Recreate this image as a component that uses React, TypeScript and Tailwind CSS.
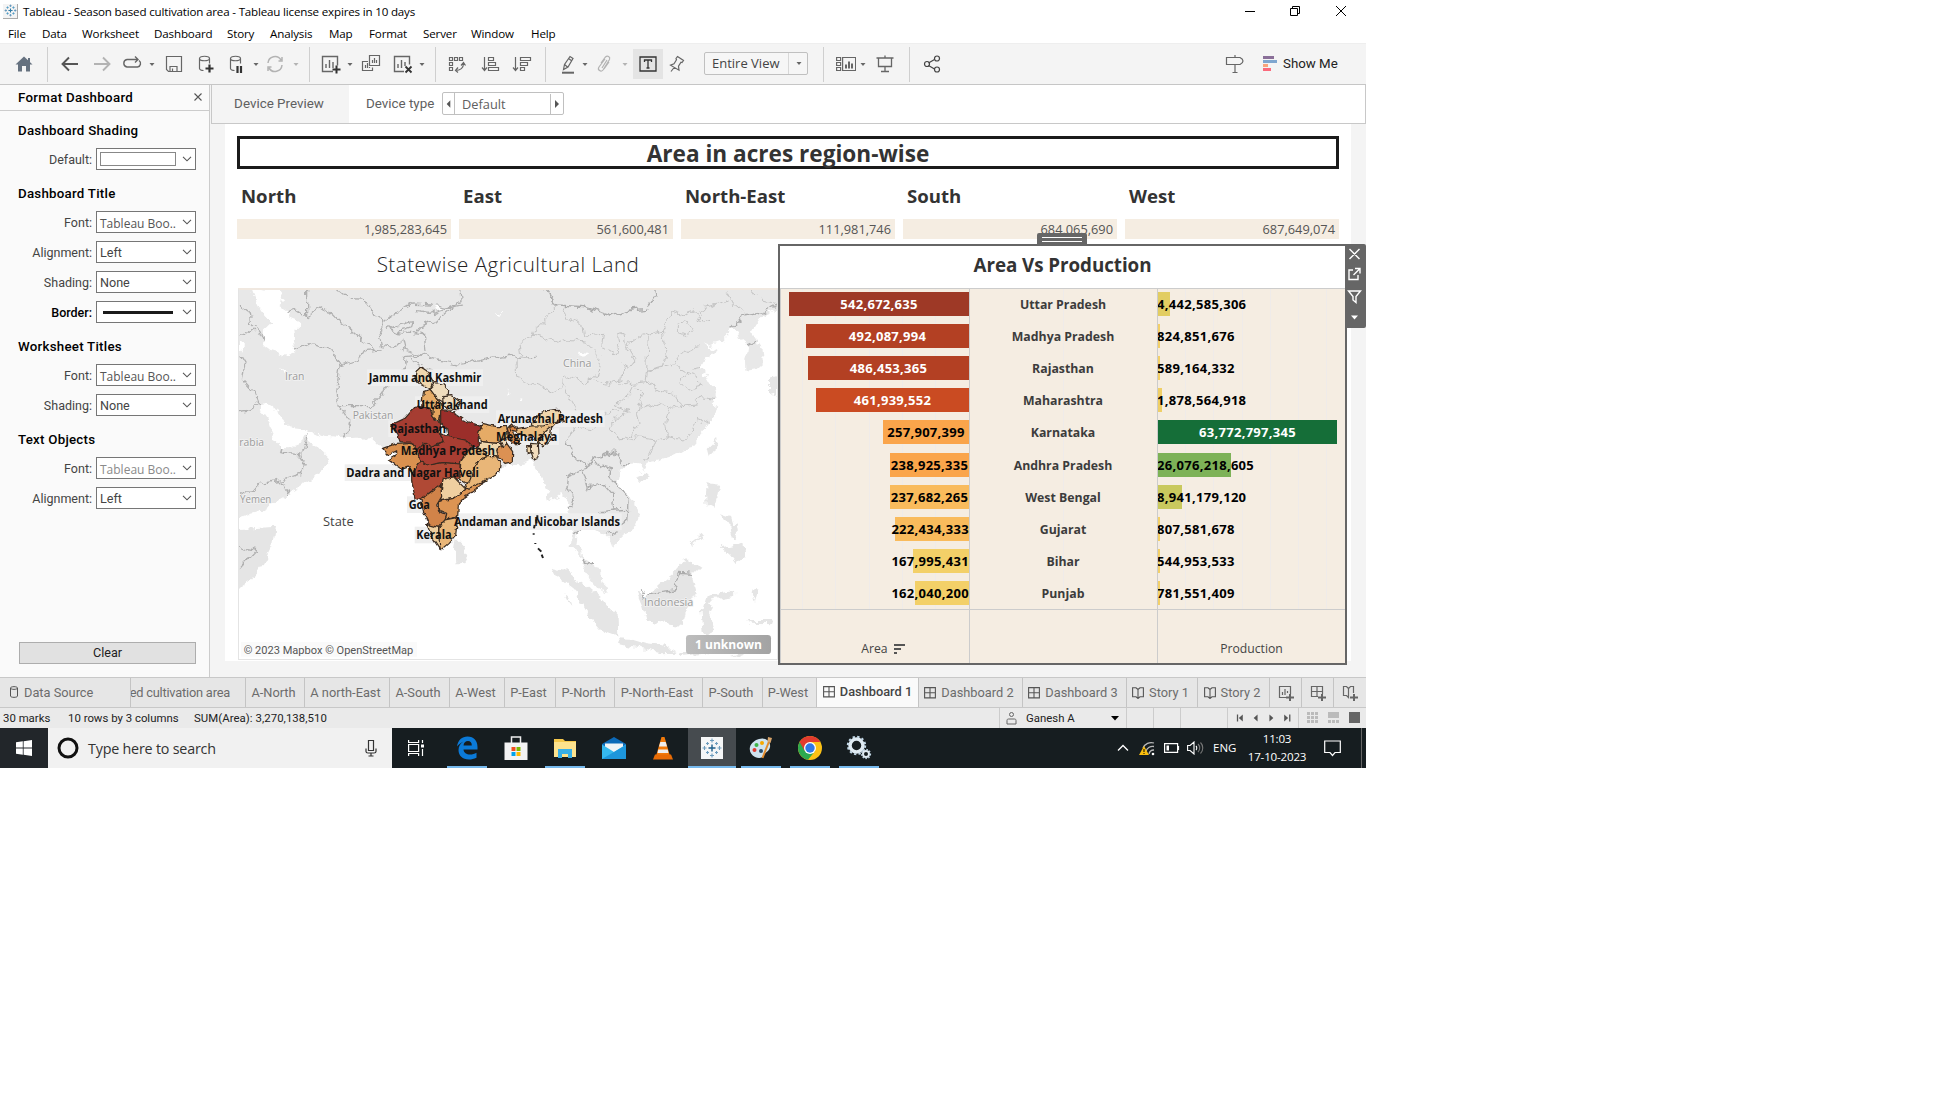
import React from "react";

type Kids = { children?: React.ReactNode };

/* ---------- small shared pieces ---------- */

function Ic({ children, cls = "", w = 20, h = 20 }: Kids & { cls?: string; w?: number; h?: number }) {
  return (
    <svg width={w} height={h} viewBox={`0 0 ${w} ${h}`} fill="none" stroke="#666" strokeWidth="1.2" className={`shrink-0 ${cls}`}>
      {children}
    </svg>
  );
}

function Caret({ cls = "", color = "#666" }: { cls?: string; color?: string }) {
  return (
    <svg width="8" height="8" viewBox="0 0 8 8" className={`shrink-0 ${cls}`}>
      <path d="M1.5 3h5L4 6z" fill={color} />
    </svg>
  );
}

function Sep({ cls = "" }: { cls?: string }) {
  return <div className={`h-[35px] w-px shrink-0 bg-[#cfcfcf] ${cls}`} />;
}

/* ---------- window chrome ---------- */

function TableauMark({ size = 14 }: { size?: number }) {
  return (
    <svg width={size} height={size} viewBox="0 0 22 22" stroke="#2f7aa5" strokeWidth="1.4" fill="none">
      <path d="M11 7.5v7M7.5 11h7" strokeWidth="1.8" />
      <path d="M11 1v4M9 3h4M11 17v4M9 19h4M1 11h4M3 9v4M17 11h4M19 9v4" stroke="#5b92b8" />
      <path d="M6 4v4M4 6h4M16 4v4M14 6h4M6 14v4M4 16h4M16 14v4M14 16h4" stroke="#4f9ac4" />
    </svg>
  );
}

function TitleBar() {
  return (
    <div className="flex h-[22px] items-center bg-white">
      <div className="ml-[3px] flex h-[15px] w-[15px] items-center justify-center border-r border-b border-[#aaa] bg-[#f4f4f4]">
        <TableauMark size={13} />
      </div>
      <span className="mt-px ml-[5px] font-['Open_Sans'] text-[11.6px] tracking-[-0.18px] text-black">
        Tableau - Season based cultivation area - Tableau license expires in 10 days
      </span>
      <Ic cls="ml-auto" w={12} h={12}>
        <path d="M1 6.5h10" stroke="#000" strokeWidth="1" />
      </Ic>
      <Ic cls="ml-[33px]" w={12} h={12}>
        <path d="M1.5 3.5h7v7h-7zM3.5 3.5v-2h7v7h-2" stroke="#000" strokeWidth="1" />
      </Ic>
      <Ic cls="mr-[19px] ml-[34px]" w={12} h={12}>
        <path d="M1 1l10 10M11 1L1 11" stroke="#000" strokeWidth="1" />
      </Ic>
    </div>
  );
}

function MenuBar() {
  const items: [string, string][] = [
    ["File", "w-[34px]"],
    ["Data", "w-[40px]"],
    ["Worksheet", "w-[72px]"],
    ["Dashboard", "w-[73px]"],
    ["Story", "w-[43px]"],
    ["Analysis", "w-[59px]"],
    ["Map", "w-[40px]"],
    ["Format", "w-[54px]"],
    ["Server", "w-[48px]"],
    ["Window", "w-[60px]"],
    ["Help", "w-[40px]"],
  ];
  return (
    <div className="flex h-[21px] items-center bg-white pt-[3px] pl-2 font-['Open_Sans'] text-[11.6px] tracking-[-0.15px] text-black">
      {items.map(([t, w]) => (
        <span key={t} className={`shrink-0 whitespace-nowrap ${w}`}>{t}</span>
      ))}
    </div>
  );
}

function ToolBar() {
  return (
    <div className="flex h-[42px] items-center border-t border-b border-t-[#eee] border-b-[#c6c6c6] bg-[#f4f4f4]">
      <Ic cls="ml-[14px]">
        <path d="M10 2.5L1.5 10.5H4V17.5H8V12H12V17.5H16V10.5H18.5z" fill="#65717f" stroke="none" />
        <path d="M14 4h2v4h-2z" fill="#65717f" stroke="none" />
      </Ic>
      <Sep cls="ml-[13px]" />
      <Ic cls="ml-3">
        <path d="M18 10H3M9 3.5L2.5 10L9 16.5" strokeWidth="1.9" stroke="#555" />
      </Ic>
      <Ic cls="ml-3">
        <path d="M2 10h15M11 3.5L17.5 10L11 16.5" strokeWidth="1.9" stroke="#b3b3b3" />
      </Ic>
      <Ic cls="ml-[10px]">
        <path d="M9 13H5a3.8 3.8 0 0 1 0-7.5H15.500M13 2.5L16 5.5L13 8.5M17 6.5a3.6 3.6 0 0 1-1.500 6.500H9" strokeWidth="1.4" />
      </Ic>
      <Caret cls="ml-[6px]" />
      <Ic cls="ml-2">
        <path d="M2.5 2.5h15v15h-13l-2-2zM6 17v-4.5h7V17M8.5 14.5V17" />
      </Ic>
      <Ic cls="ml-3">
        <path d="M3.5 4.5v10c0 1 2 2 4 2M13.5 4.5v5M3.5 4.5c0-3 10-3 10 0s-10 3-10 0" />
        <path d="M9.5 14.5h8M13.5 10.5v8" strokeWidth="2.2" stroke="#333" />
      </Ic>
      <Ic cls="ml-[10px]">
        <path d="M4.5 4.5v10c0 1 2 2 4 2M14.5 4.5v5M4.5 4.5c0-3 10-3 10 0s-10 3-10 0" />
        <path d="M11.5 12v7M15 12v7" strokeWidth="2.2" stroke="#333" />
      </Ic>
      <Caret cls="ml-[6px]" />
      <Ic cls="ml-[5px]">
        <path d="M3 9a7 7 0 0 1 13-3M17 11a7 7 0 0 1-13 3M17 3v4h-3.5M3 17v-4h3.5" stroke="#b3b3b3" strokeWidth="1.5" />
      </Ic>
      <Caret cls="ml-[7px]" color="#b3b3b3" />
      <Sep cls="ml-[9px]" />
      <Ic cls="ml-[11px]">
        <path d="M12 17.5H1.5v-15h15v9M5 14v-4M8.5 14V6M12 14V8" strokeWidth="1.4" />
        <path d="M11.5 15.5h8M15.5 11.5v8" strokeWidth="2" stroke="#333" />
      </Ic>
      <Caret cls="ml-[5px]" />
      <Ic cls="ml-[7px]">
        <path d="M8.5 1.5h10v10h-10zM11.5 9V6M13.5 9V4M15.5 9V6M7 7.5H1.5v9h10v-3M4.5 14v-3M6.5 14v-5M8.5 14v-1" />
      </Ic>
      <Ic cls="ml-3">
        <path d="M11 17.5H1.5v-15h15v8M5 14v-4M8.5 14V6M12 12V8" strokeWidth="1.4" />
        <path d="M12.5 12.5l6 6M18.5 12.5l-6 6" strokeWidth="1.8" stroke="#333" />
      </Ic>
      <Caret cls="ml-[5px]" />
      <Sep cls="ml-[9px]" />
      <Ic cls="ml-[11px]">
        <path d="M2.5 3.5h3v3h-3zM7.5 3.5h3v3h-3zM12.5 3.5h3v3h-3zM2.5 8.5h3v3h-3zM2.5 13.5h3v3h-3zM8.5 16.5c5 0 8-3 8-7M14 11.5l2.500-3L18.500 11.500M11 13.500L8.500 16.500L11 18.500" />
      </Ic>
      <Ic cls="ml-[13px]">
        <path d="M4.500 3v13M2 13.500l2.500 3l2.500-3M8.500 3.500h5v3h-5zM8.500 8.500h7v3h-7zM8.500 13.500h10v3h-10z" />
      </Ic>
      <Ic cls="ml-3">
        <path d="M3.500 3v13M1 13.500l2.500 3l2.500-3M8.500 3.500h10v3h-10zM8.500 8.500h7v3h-7zM8.500 13.500h4v3h-4z" />
      </Ic>
      <Sep cls="ml-[13px]" />
      <Ic cls="ml-3">
        <path d="M5.5 15.5l1-5L12 2.5l3 2L10 13zM6.5 10.5l3 2.5M10.5 4.5l3.500 2.500" />
        <path d="M4 18.7h12" strokeWidth="2" />
      </Ic>
      <Caret cls="ml-[3px]" />
      <Ic cls="ml-[6px]">
        <path d="M6 9l4.500-6c2-2 5 0 4 2.500L8 16c-2 2.500-6 0-4-3L10 5M12 6l-5 8M14 8l-5 7" stroke="#b3b3b3" />
      </Ic>
      <Caret cls="ml-[6px]" color="#b3b3b3" />
      <div className="ml-1 flex h-[30px] w-[30px] shrink-0 items-center justify-center bg-[#e4e4e4]">
        <svg width="18" height="16" viewBox="0 0 18 16" fill="none" stroke="#333" strokeWidth="1.3">
          <path d="M1 1h16v14H1zM5.5 6V4h7v2M9 4v8M7.5 12h3" />
        </svg>
      </div>
      <Ic cls="ml-1">
        <path d="M10.5 2.5l6 4l-1.500 2l-1-.3l-2.500 4l.5 4l-8.500-5l3.500-1.500l2.500-4l-.5-1.200zM7.500 13l-3.500 4.500" />
      </Ic>
      <div className="mb-[2px] ml-[17px] flex h-[23px] w-[104px] shrink-0 items-center rounded-[2px] border border-[#c0c0c0] bg-[#f6f6f6]">
        <span className="w-[84px] border-r border-[#d8d8d8] pl-[7px] font-['Open_Sans'] text-[13px] leading-[21px] text-[#444]">Entire View</span>
        <Caret cls="ml-[6px]" />
      </div>
      <Sep cls="ml-[15px]" />
      <Ic cls="ml-3">
        <path d="M.6 3.5h4v3h-4zM.6 8.5h4v3h-4zM.6 13.5h4v3h-4zM6.600 3.500h13v13h-13z" />
        <path d="M10 14.5v-4M13 14.5v-7M16 14.5v-5" strokeWidth="2" />
      </Ic>
      <Caret cls="ml-[3px]" />
      <Ic cls="ml-2">
        <path d="M1.5 4h17M3.5 4v8.500h13V4M10 1.500v2M10 13v4.500M6 17.500h8" strokeWidth="1.3" />
      </Ic>
      <Sep cls="ml-[14px]" />
      <Ic cls="ml-3">
        <path d="M6.500 9L12.500 5.500M6.500 11.500L12.500 15" stroke="#444" />
        <circle cx="5" cy="10" r="2.5" stroke="#444" />
        <circle cx="15" cy="4.5" r="2.5" stroke="#444" />
        <circle cx="15" cy="15.5" r="2.5" stroke="#444" />
      </Ic>
      <Ic cls="ml-[283px]">
        <path d="M1.5 3.5h13.500c4 2 4 5 0 7H1.500zM10 1v2.500M10 10.500v8M7.500 18.500h5" />
      </Ic>
      <svg width="14" height="16" viewBox="0 0 14 16" className="ml-[18px] shrink-0">
        <path d="M0 0h11v3H0z" fill="#8a6f98" />
        <path d="M0 4h14v3H0z" fill="#7fa6cf" />
        <path d="M0 8h5v3H0z" fill="#f8a47c" />
        <path d="M0 12h8v3H0z" fill="#fb6a7c" />
      </svg>
      <span className="ml-[6px] shrink-0 font-['Roboto'] text-[13.3px] whitespace-nowrap text-[#222]">Show Me</span>
    </div>
  );
}

/* ---------- format pane ---------- */

function Chevron() {
  return (
    <svg width="10" height="6" viewBox="0 0 10 6" className="mr-[3px] ml-auto shrink-0" fill="none" stroke="#555" strokeWidth="1.1">
      <path d="M1 .8L5 4.800L9 .8" />
    </svg>
  );
}

function Field({ label, value, kind = "text", bold, dim }: { label: string; value?: string; kind?: "text" | "swatch" | "line" | "font"; bold?: boolean; dim?: boolean }) {
  return (
    <div className="flex h-[22px] items-center">
      <span className={`w-[92px] shrink-0 pt-px text-right text-[12.5px] leading-[18px] ${bold ? "font-medium text-black" : "text-[#444]"}`}>{label}</span>
      <div className="ml-[4px] flex h-[22px] w-[100px] items-center border border-[#767676] bg-white pl-[3px]">
        {kind === "swatch" && <span className="h-[14px] w-[76px] border border-[#888]" />}
        {kind === "line" && <span className="ml-[3px] h-[3px] w-[70px] bg-[#1b1b1b]" />}
        {kind === "text" && <span className="pt-px text-[12.6px] leading-[18px] text-[#444]">{value}</span>}
        {kind === "font" && (
          <span className={`pt-[4px] font-['Open_Sans'] text-[12px] whitespace-nowrap ${dim ? "text-[#8a8a8a]" : "text-[#555]"}`}>{value}</span>
        )}
        <Chevron />
      </div>
    </div>
  );
}

function Group({ title, children, first }: Kids & { title: string; first?: boolean }) {
  return (
    <div className={first ? "mt-[10px]" : "mt-[14px]"}>
      <div className="h-[18px] pl-[18px] text-[13.3px] leading-[20px] font-medium tracking-[0.25px] text-black">{title}</div>
      <div className="mt-[9px] flex flex-col gap-2">{children}</div>
    </div>
  );
}

function FormatPane() {
  return (
    <div className="flex h-[592px] w-[210px] shrink-0 flex-col border-r border-[#ccc] bg-[#fafafa] font-['Roboto']">
      <div className="flex h-[26px] items-center border-b border-[#ccc] pl-[18px]">
        <span className="text-[13.3px] font-medium tracking-[0.3px] text-black">Format Dashboard</span>
        <svg width="8" height="8" viewBox="0 0 8 8" className="mr-[7px] mb-[2px] ml-auto" stroke="#555" strokeWidth="1.1">
          <path d="M.5.500l7 7M7.500.500l-7 7" />
        </svg>
      </div>
      <Group title="Dashboard Shading" first>
        <Field label="Default:" kind="swatch" />
      </Group>
      <Group title="Dashboard Title">
        <Field label="Font:" value="Tableau Boo.." kind="font" />
        <Field label="Alignment:" value="Left" />
        <Field label="Shading:" value="None" />
        <Field label="Border:" kind="line" bold />
      </Group>
      <Group title="Worksheet Titles">
        <Field label="Font:" value="Tableau Boo.." kind="font" />
        <Field label="Shading:" value="None" />
      </Group>
      <Group title="Text Objects">
        <Field label="Font:" value="Tableau Boo.." kind="font" dim />
        <Field label="Alignment:" value="Left" />
      </Group>
      <button className="mt-auto mb-[13px] ml-[19px] h-[22px] w-[177px] border border-[#adadad] bg-[#e1e1e1] text-[12.6px] leading-[20px] text-[#222]">
        Clear
      </button>
    </div>
  );
}

/* ---------- map ---------- */

const LAND =
  "M14 14H1650V80L1600 105L1565 160L1575 175L1598 205L1602 250L1580 270L1546 275L1545 240L1552 215L1555 195L1530 175L1525 150L1505 150L1470 185L1440 195L1410 182L1385 180L1405 160L1435 148L1468 125L1458 145L1440 165L1412 180L1440 202L1470 210L1432 232L1410 262L1430 290L1450 325L1460 352L1445 365L1465 380L1440 425L1420 460L1390 495L1350 520L1315 532L1280 542L1250 548L1237 575L1218 550L1195 552L1165 575L1160 602L1190 640L1215 670L1226 710L1218 742L1180 767L1148 800L1143 780L1130 765L1100 745L1075 740L1060 715L1040 760L1036 790L1055 810L1060 835L1090 852L1110 880L1120 912L1130 940L1105 925L1075 890L1060 855L1050 822L1022 800L1025 770L1032 750L1020 690L1000 638L985 650L960 662L948 655L955 630L940 600L915 560L905 540L870 550L840 548L810 555L760 605L700 640L685 680L680 750L650 790L632 810L610 780L580 700L555 650L545 590L540 560L480 540L500 525L460 508L425 472L340 475L280 470L235 450L190 445L165 430L135 385L110 370L90 372L95 395L120 430L135 480L150 498L205 500L225 465L238 490L275 510L300 535L290 560L240 600L170 650L80 700L14 718Z";
const CASPIAN =
  "M60 20L150 30L160 60L142 75L165 90L175 110L205 122L203 145L190 155L196 215L165 228L120 215L96 195L100 150L122 130L90 90L75 60Z";
const ISLANDS =
  "M14 748L70 745L138 740L130 790L100 850L60 900L14 930ZM680 780L700 800L712 828L700 850L680 850L675 815ZM965 860L1005 870L1060 912L1120 960L1160 1010L1162 1070L1120 1055L1080 1010L1030 930L980 890ZM1160 1078L1210 1080L1250 1092L1310 1100L1340 1118L1290 1120L1170 1092ZM1220 935L1250 945L1290 910L1330 880L1370 835L1410 862L1385 885L1400 940L1370 990L1358 1035L1310 1030L1250 1020L1240 980ZM1430 948L1475 938L1520 932L1505 948L1435 960L1452 985L1438 1010L1450 1048L1422 1070L1415 1000ZM1430 610L1470 615L1465 640L1450 690L1430 680L1428 640ZM1475 802L1540 788L1546 830L1520 852L1500 825ZM1460 478L1452 520L1436 535L1430 510ZM1215 590L1245 580L1256 590L1235 612ZM1470 700L1500 710L1510 740L1490 735ZM1500 740L1525 730L1530 760L1510 780ZM1620 290L1638 285V340L1620 345ZM1380 800L1420 768L1415 762L1378 795ZM1575 920L1585 930L1575 970L1568 940ZM1545 1020L1620 1020L1630 1030L1560 1028ZM1350 1120L1420 1110L1440 1122L1360 1130ZM1000 935L1015 950L1030 985L1015 965ZM1500 1125L1560 1105L1530 1130Z";
const BORDERS =
  "M230 27V110L200 90L165 100M230 110L270 78L310 105L345 135L390 175L430 205L455 210M316 27L350 55L400 58L430 100L465 125L490 105L545 72L600 75L650 85L693 65L690 27M465 125L445 160L455 200L490 205L515 182L522 210L580 225L640 245L680 255L720 248L780 235L850 228L862 235L920 232M465 150L500 135L550 125L545 140L500 155L480 145ZM560 95L600 100L693 75M560 158L575 140L640 110L690 65M585 210L580 160L500 155M195 210L240 188L290 205L325 240L330 258L385 240L400 215L455 210M330 258L320 330L328 380L365 430L340 474M328 380L420 380L450 350L470 320L500 300L530 260L520 230L580 225M27 75L60 100L65 130L90 155L100 180M27 160L55 165L75 150M27 230L45 260L40 300L75 340L88 372L60 390L27 395M27 635L65 640L90 610L155 600L215 580L222 540L210 525L165 520L150 500M155 600L177 648M215 525L235 460M27 800L80 812L27 868M540 235L570 260L610 275L620 300";
const CHINA =
  "M980 78L950 110L920 140L910 170L870 185L875 225L858 240L860 290L920 315L970 335L1000 315L1005 285L1060 310L1105 280L1110 230L1070 190L1010 180L985 190L910 165M1000 80L1015 115L1055 130L1060 165L1120 160L1115 205L1150 225L1165 205L1160 165L1185 160L1190 200L1215 240L1195 265L1180 255L1172 300L1140 312L1090 300L1078 290M1190 200L1230 170L1300 150L1325 95L1360 105L1390 95L1410 115L1440 125M1255 165L1250 270L1300 265L1308 220L1300 150M1250 270L1245 305L1170 315M1250 275L1330 250L1350 225L1400 200M1345 130L1370 125L1385 145L1370 170L1345 160ZM1330 250L1370 275L1410 265M1370 280L1350 310L1370 330L1410 320L1400 290L1370 280M1245 305L1290 330L1340 345L1350 380L1400 375L1410 350L1455 355M1215 320L1240 350L1220 390L1270 370L1320 385L1350 380L1380 375M1320 385L1310 430L1315 470L1360 480L1390 450L1400 415L1440 430M1220 390L1230 430L1210 460L1165 480L1140 440L1160 410L1200 395L1155 380L1200 340L1210 320M1165 480L1220 470L1275 480L1315 470M1275 480L1260 520L1240 545M1000 320L1030 370L1040 430L1010 490M1030 440L1090 450L1120 400L1165 395M1490 60L1460 75L1410 90L1415 115M1490 30L1510 70L1540 95M1560 27L1600 60L1635 70";
const NATIONS =
  "M945 27L980 75L1060 80L1145 105L1200 90L1250 85L1275 45L1270 27M1505 148L1540 105L1600 95L1638 75M1010 490L1035 530L1070 555L1110 530L1150 515L1180 550L1200 552M1060 570L1090 535L1110 560L1145 570L1140 595L1170 620L1195 660L1190 720L1170 735M1060 570L1010 590L1005 620L1030 650L1020 690M1060 575L1075 625L1120 610L1150 645L1155 690L1110 695L1105 720M1155 690L1195 688M1050 830L1065 852L1095 850M1230 925L1245 945L1290 935L1330 930L1345 880L1390 883M1550 195L1582 180M1135 765L1170 755M1030 765L1055 740";

type Shape = { d: string; c: string };
const STATES: Shape[] = [
  { d: "M558 275L572 261L590 272L610 305L600 328L575 315L555 295Z", c: "#efd7ae" },
  { d: "M600 328L615 308L640 312L656 328L655 345L638 365L620 355Z", c: "#efdcbd" },
  { d: "M638 350L665 347L690 365L680 392L655 390L640 375Z", c: "#efdcbd" },
  { d: "M580 335L600 328L625 360L620 395L628 412L610 420L598 395L575 380Z", c: "#e8ad68" },
  { d: "M610 380L625 362L638 375L640 392L632 400L628 425L608 410Z", c: "#e5a55d" },
  { d: "M558 378L600 385L612 420L632 430L628 455L640 485L600 500L580 490L560 510L545 487L510 485L500 455L482 435L525 415Z", c: "#a63c31" },
  { d: "M632 392L665 395L700 420L757 440L745 465L745 500L725 500L705 480L655 475L650 445L632 430Z", c: "#9b2f2c" },
  { d: "M628 455L655 470L705 480L725 500L700 530L690 552L640 548L595 555L570 545L560 510L585 490L605 500L640 485Z", c: "#a93c30" },
  { d: "M545 545L570 545L595 555L640 548L690 552L690 590L680 600L640 595L635 620L610 630L590 645L572 660L555 655L545 600Z", c: "#b04a34" },
  { d: "M458 505L500 490L545 487L560 510L570 545L548 580L538 560L515 568L475 540L500 525L500 512L475 524Z", c: "#da9150" },
  { d: "M757 430L800 440L830 440L835 470L800 490L755 485L745 465Z", c: "#e6ab66" },
  { d: "M745 500L755 485L800 490L825 490L830 510L800 530L770 530L740 515Z", c: "#f0d7ad" },
  { d: "M800 510L830 490L848 515L847 545L825 550L805 530Z", c: "#dc9152" },
  { d: "M692 545L720 505L750 505L770 530L740 545L735 580L715 615L690 600Z", c: "#e9b678" },
  { d: "M720 600L740 545L770 530L800 530L810 550L808 575L760 605L725 625L705 625Z", c: "#e9b678" },
  { d: "M640 598L670 590L690 610L708 628L670 655L632 662L635 620Z", c: "#efcfa0" },
  { d: "M625 665L670 655L708 628L760 602L745 625L700 655L685 672L683 710L660 715L645 720L650 700L625 690Z", c: "#dc9452" },
  { d: "M632 615L635 650L620 675L628 695L650 705L645 720L625 742L600 738L582 700L572 660L590 645Z", c: "#d1834a" },
  { d: "M645 720L683 712L677 765L655 790L632 810L622 780L628 742Z", c: "#e9b678" },
  { d: "M590 733L625 742L628 785L630 808L608 775Z", c: "#efcfa0" },
  { d: "M832 445L845 432L855 445L848 460L870 478L872 490L848 492L840 475Z", c: "#dc9152" },
  { d: "M838 438L862 442L862 455L842 450Z", c: "#d8803f" },
  { d: "M905 438L925 405L950 392L985 388L1000 425L975 430L940 440Z", c: "#f0d7ad" },
  { d: "M860 446L905 438L940 438L985 420L962 445L940 470L925 492L912 470L862 462Z", c: "#e9bc80" },
  { d: "M925 485L945 455L965 440L960 485L940 502Z", c: "#f2dcbd" },
  { d: "M905 490L925 492L927 520L920 540L910 535L903 515Z", c: "#f2dcbd" },
  { d: "M890 500L902 500L903 518L892 520Z", c: "#f0d7ad" },
  { d: "M810 480L828 478L830 492L818 500Z", c: "#f2dcbd" },
];

const MAP_LABELS: { t: string; x: number; y: number; w: number }[] = [
  { t: "Jammu and Kashmir", x: 416, y: 306, w: 338 },
  { t: "Uttarakhand", x: 560, y: 387, w: 213 },
  { t: "Rajasthan", x: 480, y: 459, w: 168 },
  { t: "Arunachal Pradesh", x: 803, y: 429, w: 316 },
  { t: "Meghalaya", x: 798, y: 483, w: 184 },
  { t: "Madhya Pradesh", x: 512, y: 525, w: 283 },
  { t: "Dadra and Nagar Haveli", x: 349, y: 591, w: 398 },
  { t: "Goa", x: 536, y: 687, w: 64 },
  { t: "Andaman and Nicobar Islands", x: 672, y: 738, w: 498 },
  { t: "Kerala", x: 559, y: 778, w: 106 },
];
const PLACES: { t: string; x: number; y: number; w: number }[] = [
  { t: "Iran", x: 165, y: 301, w: 58 },
  { t: "Pakistan", x: 368, y: 416, w: 122 },
  { t: "rabia", x: 28, y: 498, w: 74 },
  { t: "Yemen", x: 30, y: 670, w: 94 },
  { t: "China", x: 999, y: 261, w: 85 },
  { t: "Indonesia", x: 1242, y: 978, w: 148 },
];

function MapView() {
  return (
    <div className="h-[372px] w-[540px] border border-t-2 border-[#e4e4e4] border-t-[#f0e8e0] bg-white">
      <svg width="538" height="369" viewBox="27 30 1614 1107" className="block font-['Open_Sans']">
        <defs>
          <linearGradient id="pill" x1="0" x2="1">
            <stop offset="0" stopColor="#bdbdbd" />
            <stop offset="1" stopColor="#a3a3a3" />
          </linearGradient>
          <filter id="coast" x="0" y="0" width="1" height="1">
            <feTurbulence type="fractalNoise" baseFrequency="0.035" numOctaves="3" seed="4" />
            <feDisplacementMap in="SourceGraphic" scale="30" xChannelSelector="R" yChannelSelector="G" />
          </filter>
          <filter id="edge" x="-0.05" y="-0.05" width="1.1" height="1.1">
            <feTurbulence type="fractalNoise" baseFrequency="0.06" numOctaves="2" seed="9" />
            <feDisplacementMap in="SourceGraphic" scale="13" xChannelSelector="R" yChannelSelector="G" />
          </filter>
        </defs>
        <g filter="url(#coast)">
          <path d={LAND} fill="#e8e8e8" />
          <path d={CASPIAN} fill="#fff" />
          <path d="M1045 215l20 3l-5 12l-15-4zM605 80l30-5l5 12l-25 3zM795 98l25-5l-5 8zM830 330l12 8l-8 6zM868 355l12 2l-10 5zM27 185l15 15l-5 15l-10-10zM148 270l12 4l-6 8z" fill="#fff" />
          <path d={ISLANDS} fill="#e5e5e5" />
          <g fill="none" strokeLinejoin="round">
            <path d={BORDERS} stroke="#b0b0b0" strokeWidth="3.8" />
            <path d={CHINA} stroke="#c4c4c4" strokeWidth="3" />
            <path d={NATIONS} stroke="#acacac" strokeWidth="4" />
          </g>
        </g>
        {PLACES.map((p) => (
          <text key={p.t} x={p.x} y={p.y} textLength={p.w} lengthAdjust="spacingAndGlyphs" fontSize="34" fill="#9b9b9b" stroke="#f2f2f2" strokeWidth="5" paintOrder="stroke">
            {p.t}
          </text>
        ))}
        {MAP_LABELS.map((l) => (
          <rect key={l.t} x={l.x - 5} y={l.y - 38} width={l.w + 10} height="50" fill="#efefef" />
        ))}
        <g filter="url(#edge)">
          {STATES.map((s, i) => (
            <path key={i} d={s.d} fill={s.c} stroke="#3a2c20" strokeWidth="3.6" strokeLinejoin="round" />
          ))}
        </g>
        <path d="M922 706v10M918 718l2 12M914 735l-2 10M911 760v4M916 789v3M924 805l10 10M935 824l4 10" fill="none" stroke="#222" strokeWidth="6" />
        {MAP_LABELS.map((l) => (
          <text key={l.t} x={l.x} y={l.y} textLength={l.w} lengthAdjust="spacingAndGlyphs" fontSize="36" fontWeight="700" fill="#111">
            {l.t}
          </text>
        ))}
        <text x="279" y="738" textLength="92" lengthAdjust="spacingAndGlyphs" fontSize="36" fill="#444">State</text>
        <rect x="33" y="1086" width="528" height="44" fill="#fafafa" />
        <text x="41" y="1122" textLength="509" lengthAdjust="spacingAndGlyphs" fontSize="33" fill="#555" className="font-['Roboto']">© 2023 Mapbox © OpenStreetMap</text>
        <rect x="1368" y="1065" width="255" height="57" rx="10" fill="url(#pill)" />
        <text x="1395" y="1106" textLength="201" lengthAdjust="spacingAndGlyphs" fontSize="38" fontWeight="700" fill="#fff">1 unknown</text>
      </svg>
    </div>
  );
}

/* ---------- area / production chart ---------- */

type Row = { state: string; area: string; aw: number; ac: string; am: string; prod: string; pw: number; pc: string; pm: string };
const IN = "mid";
const ROWS: Row[] = [
  { state: "Uttar Pradesh", area: "542,672,635", aw: 180, ac: "#9e3926", am: "w", prod: "4,442,585,306", pw: 12, pc: "#e2cd62", pm: "" },
  { state: "Madhya Pradesh", area: "492,087,994", aw: 163, ac: "#b34023", am: "w", prod: "824,851,676", pw: 1.5, pc: "#f3d068", pm: "" },
  { state: "Rajasthan", area: "486,453,365", aw: 161, ac: "#b34023", am: "w", prod: "589,164,332", pw: 1.5, pc: "#f3d068", pm: "" },
  { state: "Maharashtra", area: "461,939,552", aw: 153, ac: "#ca4b22", am: "w", prod: "1,878,564,918", pw: 4, pc: "#efcf67", pm: "" },
  { state: "Karnataka", area: "257,907,399", aw: 86, ac: "#faa54b", am: IN, prod: "63,772,797,345", pw: 179, pc: "#156e38", pm: "w" },
  { state: "Andhra Pradesh", area: "238,925,335", aw: 79, ac: "#faa54b", am: IN, prod: "26,076,218,605", pw: 73, pc: "#7db257", pm: "" },
  { state: "West Bengal", area: "237,682,265", aw: 79, ac: "#f9bb5c", am: IN, prod: "8,941,179,120", pw: 24, pc: "#c9c95e", pm: "" },
  { state: "Gujarat", area: "222,434,333", aw: 74, ac: "#f9bb5c", am: "", prod: "807,581,678", pw: 1.5, pc: "#f3d068", pm: "" },
  { state: "Bihar", area: "167,995,431", aw: 56, ac: "#f3d068", am: "", prod: "544,953,533", pw: 1.5, pc: "#f3d068", pm: "" },
  { state: "Punjab", area: "162,040,200", aw: 54, ac: "#f3d068", am: "", prod: "781,551,409", pw: 1.5, pc: "#f3d068", pm: "" },
];

function ChartPanel() {
  return (
    <div className="relative -mt-px -ml-px h-[421px] w-[569px] shrink-0 border-2 border-[#666] bg-white font-['Open_Sans']">
      <div className="absolute top-[-13px] left-[257px] flex h-[12px] w-[50px] flex-col items-center gap-[3px] rounded-t-[2px] bg-[#666] pt-[4px]">
        <span className="h-px w-10 bg-white" />
        <span className="h-px w-10 bg-white" />
      </div>
      <div className="absolute top-[-2px] left-[566px] flex h-[84px] w-[20px] flex-col items-start rounded-r-[2px] bg-[#666]">
        <svg width="19" height="84" viewBox="1 0 19 84" fill="none" stroke="#fff" strokeWidth="1.4">
          <path d="M4.5 5l10 10M14.5 5l-10 10M8 26H4v9.5h9V31M10 24.5h5v5M15 24.5l-6.500 6.500M3.500 47h12L11 52.500v6l-3-2.500V52.500z" />
          <path d="M6 71.5h7l-3.500 4z" fill="#fff" stroke="none" />
        </svg>
      </div>
      <div className="flex h-[42px] items-center justify-center pb-[4px] text-[18.8px] font-bold tracking-[-0.06px] text-[#333]">Area Vs Production</div>
      <div className="flex h-[375px] flex-col border-t border-[#ccc] bg-[#f5ede2]">
        <div className="relative flex h-[321px] shrink-0 flex-col border-b border-[#ccc]">
          <div className="absolute inset-0 flex">
            {["w-[23px]", "w-[33px]", "w-[34px]", "w-[33px]", "w-[33px]"].map((w, i) => (
              <span key={i} className={`shrink-0 border-r border-[#efebe9] ${w}`} />
            ))}
            <span className="w-[34px] shrink-0" />
            <span className="w-[94px] shrink-0 border-r border-[#efebe9]" />
            <span className="w-[94px] shrink-0" />
            {["a", "b", "c", "d", "e", "f"].map((w) => (
              <span key={w} className="w-[28.2px] shrink-0 border-r border-[#efebe9]" />
            ))}
          </div>
          {ROWS.map((r, i) => (
            <div key={r.state} className={`relative flex shrink-0 items-start pt-[3px] text-[13px] leading-[25px] font-bold tracking-[0.3px] text-black ${i === 4 ? "h-[33px]" : i === 9 ? "h-[31px]" : "h-8"}`}>
              <div className="flex w-[189px] justify-end">
                <div className={`flex h-6 whitespace-nowrap ${r.am ? "justify-center" : "justify-end"} ${r.am === "w" ? "text-white" : ""}`} style={{ width: r.aw, background: r.ac }}>
                  {r.area}
                </div>
              </div>
              <div className="w-[188px] text-center text-[12.3px] tracking-normal text-[#3c3c3c]">{r.state}</div>
              <div className={`ml-px flex h-6 whitespace-nowrap ${r.pm ? "justify-center text-white" : ""}`} style={{ width: r.pw, background: r.pc }}>
                <span className={r.pm ? "" : "-ml-px"}>{r.prod}</span>
              </div>
            </div>
          ))}
          <div className="absolute inset-y-0 left-0 h-[374px] w-[190px] border-r border-l border-[#ccc]" />
          <div className="absolute inset-y-0 left-[377px] h-[374px] w-px bg-[#ccc]" />
        </div>
        <div className="flex h-[53px] items-end pb-[5px] text-[12.2px] text-[#444]">
          <div className="flex w-[191px] items-center justify-center gap-[6px] pl-[16px]">
            Area
            <svg width="12" height="12" viewBox="0 0 12 12" fill="#555">
              <path d="M0 1h11v2H0zM0 5h7v2H0zM0 9h3v2H0z" />
            </svg>
          </div>
          <div className="w-[187px]" />
          <div className="w-[187px] text-center">Production</div>
        </div>
      </div>
    </div>
  );
}

/* ---------- dashboard ---------- */

const REGIONS: [string, string][] = [
  ["North", "1,985,283,645"],
  ["East", "561,600,481"],
  ["North-East", "111,981,746"],
  ["South", "684,065,690"],
  ["West", "687,649,074"],
];

function Dashboard() {
  return (
    <div className="flex h-[592px] w-[1156px] flex-col bg-[#f4f4f4] font-['Open_Sans']">
      <div className="ml-px flex h-[39px] items-stretch border-r border-b border-l border-[#c8c8c8] bg-white font-['Roboto'] text-[13.4px] text-[#606060]">
        <div className="flex w-[137px] items-center justify-center bg-[#f4f4f4] pt-px pr-[3px]">Device Preview</div>
        <div className="flex items-center pl-[17px]">
          <span className="w-[76px] pt-px">Device type</span>
          <div className="mb-px flex h-[23px] items-center rounded-[2px] border border-[#c0c0c0]">
            <svg width="12" height="21" viewBox="0 0 12 21" className="border-r border-[#c0c0c0]">
              <path d="M8 7v8L4 11z" fill="#555" />
            </svg>
            <span className="w-[96px] border-r border-[#c0c0c0] pl-[7px] font-['Open_Sans'] text-[12.8px] leading-[20px]">Default</span>
            <svg width="12" height="21" viewBox="0 0 12 21">
              <path d="M4 7v8L8 11z" fill="#555" />
            </svg>
          </div>
        </div>
      </div>
      <div className="ml-[15px] h-[537px] w-[1126px] bg-white px-3 pt-[12px]">
        <div className="flex h-[33px] items-center justify-center border-[3px] border-[#1b1b1b] pt-[2px] text-[22.6px] font-bold text-[#333]">Area in acres region-wise</div>
        <div className="grid h-[76px] grid-cols-5 gap-2 pt-3">
          {REGIONS.map(([n, v]) => (
            <div key={n}>
              <div className="h-[38px] pl-1 text-[18.6px] leading-[30px] font-bold text-[#333]">{n}</div>
              <div className="h-5 bg-[#f5ede2] pr-[4px] text-right text-[12.8px] leading-[21px] text-[#555]">{v}</div>
            </div>
          ))}
        </div>
        <div className="flex">
          <div className="w-[542px] shrink-0">
            <div className="flex h-[43px] items-center justify-center pb-[5px] text-[20.6px] font-light tracking-[0.5px] text-[#222]">Statewise Agricultural Land</div>
            <div className="ml-px">
              <MapView />
            </div>
          </div>
          <ChartPanel />
        </div>
      </div>
    </div>
  );
}

/* ---------- sheet tabs and status ---------- */

function GridIcon() {
  return (
    <svg width="12" height="12" viewBox="0 0 12 12" fill="none" stroke="#555" strokeWidth="1.1" className="mr-[5px] shrink-0">
      <path d="M.6.600h10.800v10.300H.6zM6 .600v10.300M.6 5.700h10.800" />
    </svg>
  );
}
function BookIcon() {
  return (
    <svg width="12" height="12" viewBox="0 0 12 12" fill="none" stroke="#555" strokeWidth="1.1" className="mr-[5px] shrink-0">
      <path d="M6 2.5L4 .8H.6v9H4l2 1.700l2-1.700h3.400v-9H8zM6 2.500v9" />
    </svg>
  );
}

function Tabs() {
  const tabs: { t: string; w: string; k?: string }[] = [
    { t: "A-North", w: "w-[59px]" },
    { t: "A north-East", w: "w-[85px]" },
    { t: "A-South", w: "w-[60px]" },
    { t: "A-West", w: "w-[55px]" },
    { t: "P-East", w: "w-[51px]" },
    { t: "P-North", w: "w-[59px]" },
    { t: "P-North-East", w: "w-[88px]" },
    { t: "P-South", w: "w-[60px]" },
    { t: "P-West", w: "w-[54px]" },
    { t: "Dashboard 1", w: "w-[102px]", k: "on" },
    { t: "Dashboard 2", w: "w-[104px]", k: "grid" },
    { t: "Dashboard 3", w: "w-[104px]", k: "grid" },
    { t: "Story 1", w: "w-[71px]", k: "book" },
    { t: "Story 2", w: "w-[72px]", k: "book" },
  ];
  const cell = "flex shrink-0 items-center justify-center border-r border-[#c4c4c4] whitespace-nowrap";
  return (
    <div className="flex h-[31px] border-t border-b border-[#c8c8c8] bg-[#e6e6e6] font-['Roboto'] text-[12.8px] text-[#6c6c6c]">
      <div className="flex w-[131px] shrink-0 items-center border-r border-[#c4c4c4] pl-[10px]">
        <svg width="8" height="12" viewBox="0 0 8 12" fill="none" stroke="#555" className="mr-[6px] mb-[2px]">
          <path d="M.5 2v8c0 1.800 7 1.800 7 0V2M.5 2c0-1.800 7-1.800 7 0s-7 1.800-7 0" />
        </svg>
        Data Source
      </div>
      <div className="flex w-[115px] shrink-0 items-center justify-end overflow-hidden border-r border-[#c4c4c4] pr-[15px] tracking-[-0.2px] whitespace-nowrap">ed cultivation area</div>
      {tabs.map((x) => (
        <div key={x.t} className={`${cell} ${x.w} ${x.k === "on" ? "bg-[#fafafa] pb-[2px] font-medium text-[#444]" : "pr-[3px]"}`}>
          {(x.k === "on" || x.k === "grid") && <GridIcon />}
          {x.k === "book" && <BookIcon />}
          {x.t}
        </div>
      ))}
      <div className={`${cell} w-8`}>
        <svg width="16" height="16" viewBox="0 0 16 16" fill="none" stroke="#666" strokeWidth="1.2">
          <path d="M9 12.5H1.5v-11h11V9M4.5 10V7M7 10V4M9.5 8V6" />
          <path d="M8 12.5h8M12 9v7" strokeWidth="2" />
        </svg>
      </div>
      <div className={`${cell} w-8`}>
        <svg width="16" height="16" viewBox="0 0 16 16" fill="none" stroke="#666" strokeWidth="1.2">
          <path d="M8 11.5H1.5v-10h11V9M7 1.5v10M1.5 6.5h11" />
          <path d="M8 12.5h8M12 9v7" strokeWidth="2" />
        </svg>
      </div>
      <div className="flex w-8 items-center justify-center">
        <svg width="16" height="16" viewBox="0 0 16 16" fill="none" stroke="#666" strokeWidth="1.2">
          <path d="M6.5 3.5l-2-2h-3v9h3l2 2v-9l2-2h3V8" />
          <path d="M8 12.5h8M12 9v7" strokeWidth="2" />
        </svg>
      </div>
    </div>
  );
}

function StatusBar() {
  return (
    <div className="flex h-5 items-center bg-[#eaeaea] pl-[3px] font-['Roboto'] text-[11.4px] text-[#222]">
      <span className="w-[65px] pt-[2px]">30 marks</span>
      <span className="w-[126px] pt-[2px]">10 rows by 3 columns</span>
      <span className="pt-[2px] tracking-[0.05px]">SUM(Area): 3,270,138,510</span>
      <div className="ml-auto flex h-5 w-[128px] items-center border-r border-l border-[#ccc] pl-[6px]">
        <svg width="11" height="14" viewBox="0 0 11 14" fill="none" stroke="#666" className="mb-px">
          <circle cx="5.5" cy="3.5" r="2" />
          <path d="M1 13V9.5c0-1 .5-1.500 1.500-1.500h6c1 0 1.500.500 1.500 1.500V13z" />
        </svg>
        <span className="ml-[9px] pt-px">Ganesh A</span>
        <svg width="8" height="5" viewBox="0 0 8 5" className="mr-[7px] ml-auto">
          <path d="M0 0h8L4 4.500z" />
        </svg>
      </div>
      <div className="h-5 w-[27px] border-r border-[#ccc]" />
      <div className="h-5 w-[27px] border-r border-[#ccc]" />
      <div className="h-5 w-[47px] border-r border-[#ccc]" />
      <svg width="71" height="20" viewBox="-1 0 71 20" fill="#555" className="border-r border-[#ccc]">
        <path d="M8 6.5h1.300v7H8zM14 6.500v7l-4-3.500zM29 6.500v7l-4-3.500zM41 6.500v7l4-3.500zM56 6.500v7l4-3.500zM61 6.500h1.300v7H61z" />
      </svg>
      <svg width="67" height="20" viewBox="0 0 67 20">
        <path d="M8 4h3v3H8zM12 4h3v3h-3zM16 4h3v3h-3zM8 8h3v3H8zM12 8h3v3h-3zM16 8h3v3h-3zM8 12h3v3H8zM12 12h3v3h-3zM16 12h3v3h-3zM29 4h11v6H29zM29 12h3v3h-3zM33 12h3v3h-3zM37 12h3v3h-3z" fill="#bbb" />
        <path d="M50 4h11v11H50z" fill="#666" />
      </svg>
    </div>
  );
}

/* ---------- taskbar ---------- */

function App28({ children, on, run = true }: Kids & { on?: boolean; run?: boolean }) {
  return (
    <div className={`flex h-10 w-[48px] shrink-0 flex-col items-center ${on ? "bg-[#464b4f]" : ""}`}>
      <svg width="28" height="28" viewBox="0 0 28 28" className="mt-[6px]">{children}</svg>
      {run && <div className={`mt-auto h-[2px] bg-[#76b9ed] ${on ? "w-[48px]" : "w-10"}`} />}
    </div>
  );
}

function TaskBar() {
  return (
    <div className="flex h-10 items-center bg-[#161d20] text-white">
      <div className="flex h-10 w-12 shrink-0 items-center justify-center bg-[#22262a]">
        <svg width="16" height="16" viewBox="0 0 16 16" fill="#fff">
          <path d="M0 2.300L6.800 1.300V7.600H0zM7.600 1.200L16 0V7.600H7.600zM0 8.400h6.800v6.300L0 13.700zM7.600 8.400H16V16L7.600 14.800z" />
        </svg>
      </div>
      <div className="flex h-10 w-[344px] shrink-0 items-center bg-[#f1f1f1] pl-[9px]">
        <svg width="22" height="22" viewBox="0 0 22 22" fill="none" stroke="#111" strokeWidth="3">
          <circle cx="11" cy="11" r="9" />
        </svg>
        <span className="mt-px ml-[9px] font-['Open_Sans'] text-[14.3px] tracking-[-0.2px] text-[#333]">Type here to search</span>
        <svg width="12" height="18" viewBox="0 0 12 18" className="mr-[15px] ml-auto" fill="none" stroke="#333" strokeWidth="1.2">
          <path d="M3.500 1.500h5v10h-5zM1 9.500v3c0 1 1 1.500 2 1.500h6c1 0 2-.5 2-1.500v-3M6 14v3M3.500 17h5" />
        </svg>
      </div>
      <svg width="16" height="16" viewBox="0 0 16 16" className="ml-4 shrink-0" fill="none" stroke="#fff" strokeWidth="1.2">
        <path d="M.6 0v2.500h10V0M.6 16v-2.500h10V16M.6 4.500h10v7H.6zM14.500 0v3M14.500 9v7" />
        <path d="M13 4.500h3v3h-3z" fill="#fff" stroke="none" />
      </svg>
      <div className="ml-[19px] flex shrink-0 gap-px">
        <App28>
          <path d="M4 12.500C5 6 9 2.500 14.500 2.500C21 2.500 24.500 7 24.500 13v2.500H10.500c.3 3.500 3 5 6.500 5c2.500 0 4.500-.7 6.500-1.800v5c-2.500 1.200-5 1.800-7.500 1.800C9.500 25.500 5.500 21.500 5.500 16c0-4 2-6.500 5-8.500C8 8.500 5.500 10.500 4 12.500zM10.500 11.500h8.300c0-3-1.300-4.500-3.800-4.500s-4.200 1.700-4.500 4.500z" fill="#0b7ad8" />
        </App28>
        <App28 run={false}>
          <path d="M9.500 9V3h9v6" fill="none" stroke="#eee" strokeWidth="1.5" />
          <path d="M2.500 8.500h23V26h-23z" fill="#f3f3f3" />
          <path d="M9.500 13h4v4h-4z" fill="#f04e1f" /><path d="M14.500 13h4v4h-4z" fill="#7cb900" />
          <path d="M9.500 18h4v4h-4z" fill="#01a3ec" /><path d="M14.500 18h4v4h-4z" fill="#fcb800" />
        </App28>
        <App28>
          <path d="M3 5h9l2 2h11v16H3z" fill="#f5c84c" /><path d="M3 8h22v15H3z" fill="#fde28d" />
          <path d="M7 15h14v9h-4v-4h-6v4H7z" fill="#38b0e8" />
        </App28>
        <App28 run={false}>
          <path d="M2 10L14 3l12 7v15H2z" fill="#0d6ab8" /><path d="M5 9.500h18V18H5z" fill="#f1f4f6" />
          <path d="M2 10.500L14 18L26 10.500V25H2z" fill="#35b8ee" /><path d="M2 25L26 11v14z" fill="#1d96dc" />
        </App28>
        <App28 run={false}>
          <path d="M12.500 3h3L21 22H7z" fill="#f27a0a" /><path d="M11.300 8h5.400l1.300 4.500h-8zM9.300 15.500h9.400L19.500 19h-11z" fill="#eee" />
          <path d="M6 20.500h16l2 5H4z" fill="#e96c05" />
        </App28>
        <App28 on>
          <path d="M3 3h22v22H3z" fill="#f5f6f7" />
          <path d="M14 10.500v7M10.500 14h7" stroke="#1f5f8b" strokeWidth="1.4" />
          <path d="M14 4.500v4M12 6.500h4M14 19.500v4M12 21.500h4M4.500 14h4M6.500 12v4M19.500 14h4M21.500 12v4M9.500 8v3M8 9.500h3M18.500 8v3M17 9.500h3M9.500 17v3M8 18.500h3M18.500 17v3M17 18.500h3" stroke="#6d9cbd" strokeWidth="1.1" />
        </App28>
        <App28>
          <path d="M12 5C18 3 24 7 23 13c-1 5-5 5-6 8s-5 4-9 2S2 17 3 13s5-7 9-8z" fill="#cfe3ef" />
          <circle cx="7.5" cy="16" r="2" fill="#e03c31" /><circle cx="9.5" cy="11" r="2" fill="#3db54a" /><circle cx="15" cy="9" r="2" fill="#f6a800" /><circle cx="14" cy="17" r="2" fill="#244a6b" />
          <path d="M23 5L15.500 24" stroke="#e28b2d" strokeWidth="2" /><path d="M21 3l4 1l-1.500 5l-3-1.500z" fill="#d9a56b" />
        </App28>
        <App28>
          <circle cx="14" cy="14" r="12" fill="#fbc116" />
          <path d="M14 14L3.600 8A12 12 0 0 0 12 25.800L19.200 17z" fill="#2da94f" />
          <path d="M14 8h10.400A12 12 0 0 0 3.600 8L8.800 17z" fill="#e33b2e" />
          <circle cx="14" cy="14" r="6" fill="#fff" /><circle cx="14" cy="14" r="4.7" fill="#2f78e8" />
        </App28>
        <App28>
          <circle cx="11.5" cy="11.5" r="6.5" fill="none" stroke="#dfeaf2" strokeWidth="3.5" />
          <circle cx="11.5" cy="11.5" r="8.7" fill="none" stroke="#c4d9e8" strokeWidth="2" strokeDasharray="2.3 2.3" />
          <circle cx="21" cy="20" r="3" fill="none" stroke="#dfeaf2" strokeWidth="2" />
          <circle cx="21" cy="20" r="4.5" fill="none" stroke="#c4d9e8" strokeWidth="1.3" strokeDasharray="1.5 1.5" />
        </App28>
      </div>
      <div className="ml-auto flex h-10 items-center font-['Open_Sans']">
        <svg width="12" height="8" viewBox="0 0 12 8" fill="none" stroke="#fff" strokeWidth="1.3">
          <path d="M1 6.500l5-5l5 5" />
        </svg>
        <svg width="16" height="16" viewBox="0 0 16 16" className="ml-[10px]" fill="none">
          <path d="M4 8a9 9 0 0 1 11-5M7 11a7 7 0 0 1 8-4.500M10 14a5 5 0 0 1 5-4" stroke="#bbb" strokeWidth="1.3" />
          <circle cx="14" cy="14" r="1.3" fill="#fff" />
          <path d="M5 6l5 9H0z" fill="#fbbf0e" /><path d="M5 9v3M5 13v1" stroke="#000" />
        </svg>
        <svg width="16" height="10" viewBox="0 0 16 10" className="ml-[9px]" fill="none" stroke="#fff" strokeWidth="1.2">
          <path d="M.6.600h13v8.800H.6zM14.500 3v4" /><path d="M2.500 2.500h2.500v5H2.500z" fill="#fff" stroke="none" />
        </svg>
        <svg width="17" height="14" viewBox="0 0 17 14" className="ml-[7px]" fill="none" stroke="#fff" strokeWidth="1.1">
          <path d="M.6 4.500h2.500L7 1v12L3.100 9.500H.6zM9 5c1 1 1 3 0 4" /><path d="M11 3c2.300 2.300 2.300 5.700 0 8M13.500 1.500c3 3 3 8 0 11" stroke="#777" />
        </svg>
        <span className="ml-[9px] w-[23px] text-[11.5px]">ENG</span>
        <div className="ml-[11px] w-[60px] text-center text-[11.6px] leading-[18px] tracking-[-0.2px] whitespace-nowrap">
          <div>11:03</div>
          <div>17-10-2023</div>
        </div>
        <svg width="17" height="17" viewBox="0 0 17 17" className="ml-[17px]" fill="none" stroke="#fff" strokeWidth="1.2">
          <path d="M.7 1h15.600v11.500H11L8.500 15.500L6 12.500H.7z" />
        </svg>
        <div className="mr-1 ml-[20px] h-10 w-px bg-[#666]" />
      </div>
    </div>
  );
}

export default function App() {
  return (
    <div className="h-[1106px] w-[1958px] overflow-hidden bg-white">
      <div className="flex w-[1366px] flex-col">
        <TitleBar />
        <MenuBar />
        <ToolBar />
        <div className="flex">
          <FormatPane />
          <Dashboard />
        </div>
        <Tabs />
        <StatusBar />
        <TaskBar />
      </div>
    </div>
  );
}
